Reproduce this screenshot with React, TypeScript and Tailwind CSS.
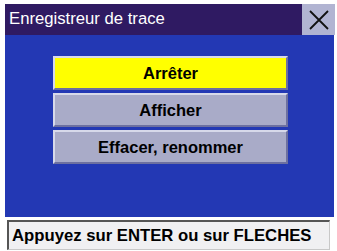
export default function App() {
  const items = [
    { label: 'Arrêter', active: true },
    { label: 'Afficher', active: false },
    { label: 'Effacer, renommer', active: false },
  ];

  return (
    <div
      className="w-[337px] h-[251px] bg-white overflow-hidden pt-[4px]"
      style={{ fontFamily: '"Liberation Sans", Arial, sans-serif' }}
    >
      {/* title bar */}
      <div className="ml-[5px] w-[330px] h-[31px] flex">
        <div className="flex-1 bg-[#2f1a62] flex items-center pl-[4px] text-white text-[16.7px] leading-none">
          Enregistreur de trace
        </div>
        <div className="w-[33px] bg-[#b1b4d2] flex items-center justify-center">
          <svg width="22" height="22" viewBox="0 0 22 22">
            <path d="M2 2 L20 20 M20 2 L2 20" stroke="#111" strokeWidth="1.8" />
          </svg>
        </div>
      </div>

      {/* menu */}
      <div className="ml-[5px] w-[329px] h-[182px] bg-[#2338b4] pt-[21px] pl-[48px] flex flex-col items-start gap-[3px]">
        {items.map((it) => (
          <div
            key={it.label}
            className={
              'w-[235px] h-[34px] flex items-center justify-center font-bold text-[16.5px] text-black border-2 border-t-[#d7d9ea] border-l-[#d7d9ea] border-b-[#6d70a0] border-r-[#6d70a0] ' +
              (it.active ? 'bg-[#ffff00]' : 'bg-[#a9abc8]')
            }
          >
            {it.label}
          </div>
        ))}
      </div>

      {/* status */}
      <div className="ml-[7px] mt-[3px] w-[323px] h-[30px] bg-[#f0f0f2] border-t-2 border-l-2 border-t-[#555] border-l-[#555] border-r border-b border-r-[#c8c8c8] border-b-[#c8c8c8] flex items-center pl-[3px] text-[16.7px] font-bold text-black whitespace-nowrap">
        Appuyez sur ENTER ou sur FLECHES
      </div>
    </div>
  );
}
